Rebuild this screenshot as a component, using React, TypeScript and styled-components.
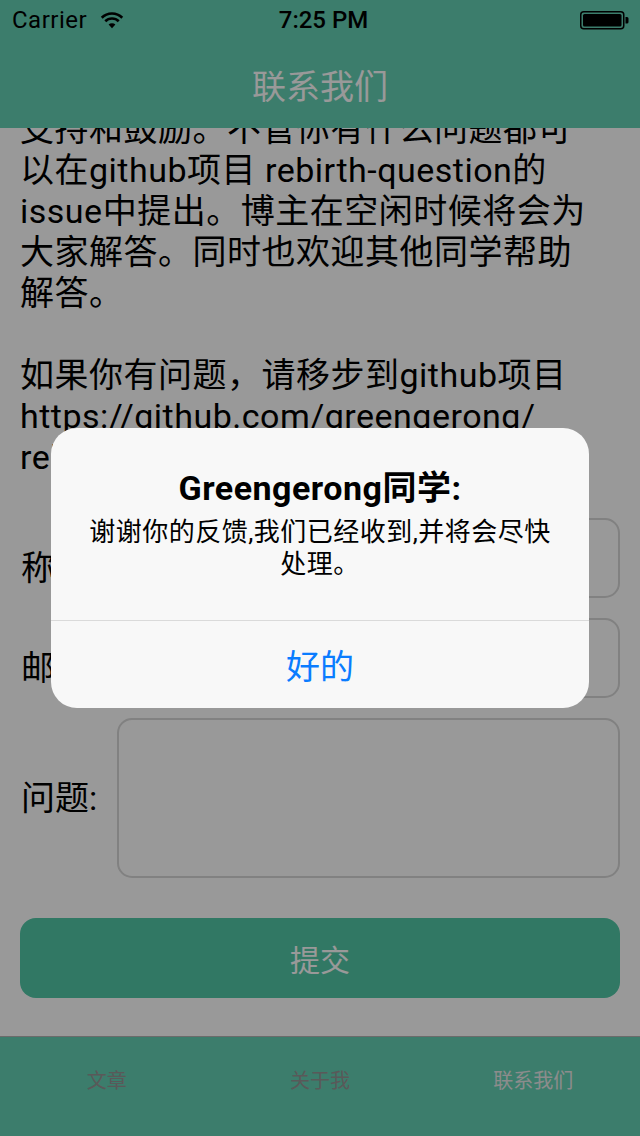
import React from "react";
import styled, { createGlobalStyle } from "styled-components";

const GlobalStyle = createGlobalStyle`
  html, body {
    margin: 0;
    padding: 0;
    width: 640px;
    height: 1136px;
    overflow: hidden;
    background: #fff;
  }
  * { box-sizing: border-box; }
`;

const GREEN = "#64d0b4";
const FONT = `Roboto, "Noto Sans CJK SC", sans-serif`;

const Screen = styled.div`
  position: relative;
  width: 640px;
  height: 1136px;
  display: flex;
  flex-direction: column;
  background: #fff;
  overflow: hidden;
  font-family: ${FONT};
`;

const StatusBar = styled.div`
  height: 40px;
  flex: 0 0 40px;
  background: ${GREEN};
  display: grid;
  grid-template-columns: 1fr auto 1fr;
  align-items: center;
  padding: 0 11px 0 12px;
  color: #000;
  font-size: 24px;
`;

const Carrier = styled.div`
  display: flex;
  align-items: center;
  gap: 13px;
  letter-spacing: 0.5px;
`;

const Clock = styled.div`
  font-weight: 500;
  font-size: 24px;
  padding-left: 6px;
`;

const BatteryWrap = styled.div`
  justify-self: end;
  display: flex;
  align-items: center;
`;

const NavBar = styled.div`
  height: 88px;
  flex: 0 0 88px;
  background: ${GREEN};
  display: flex;
  align-items: center;
  justify-content: center;
  color: #fff;
  font-size: 34px;
`;

const Content = styled.div`
  flex: 1;
  overflow: hidden;
  padding: 0 20px;
`;

const Scroller = styled.div`
  margin-top: -19px;
  display: flex;
  flex-direction: column;
`;

const Paragraph = styled.p<{ $gap?: number }>`
  margin: ${(p) => p.$gap ?? 0}px 0 0;
  font-size: 34px;
  line-height: 41px;
  letter-spacing: 0.5px;
  color: #000;
  white-space: nowrap;
`;

const Form = styled.div`
  margin-top: 40px;
  display: flex;
  flex-direction: column;
`;

const FormRow = styled.div<{ $h: number }>`
  height: ${(p) => p.$h}px;
  display: flex;
  align-items: center;
`;

const Label = styled.div`
  flex: 0 0 97px;
  font-size: 34px;
  line-height: 40px;
  color: #000;
  padding-left: 1px;
`;

const Field = styled.div<{ $h: number }>`
  align-self: flex-start;
  flex: 1;
  height: ${(p) => p.$h}px;
  border: 2px solid #d7d7d7;
  border-radius: 15px;
`;

const SubmitButton = styled.div`
  margin-top: 40px;
  height: 80px;
  border-radius: 16px;
  background: #52c8a7;
  color: #fff;
  font-size: 30px;
  display: flex;
  align-items: center;
  justify-content: center;
`;

const TabBar = styled.div`
  height: 100px;
  flex: 0 0 100px;
  background: ${GREEN};
  border-top: 1px solid #b3b3b3;
  display: grid;
  grid-template-columns: repeat(3, 1fr);
`;

const Tab = styled.div<{ $active?: boolean }>`
  display: flex;
  justify-content: center;
  padding-top: 32px;
  font-size: 20px;
  line-height: 24px;
  color: ${(p) => (p.$active ? "#eaeaea" : "#959595")};
`;

const Dim = styled.div`
  position: absolute;
  inset: 0;
  background: rgba(0, 0, 0, 0.4);
  display: flex;
  align-items: center;
  justify-content: center;
`;

const Alert = styled.div`
  width: 538px;
  border-radius: 26px;
  background: #f8f8f8;
  overflow: hidden;
  display: flex;
  flex-direction: column;
`;

const AlertBody = styled.div`
  padding: 39px 30px 40px;
  text-align: center;
  display: flex;
  flex-direction: column;
  gap: 7px;
`;

const AlertTitle = styled.div`
  font-size: 34px;
  line-height: 42px;
  font-weight: 700;
  letter-spacing: 0.5px;
  color: #000;
`;

const AlertMessage = styled.div`
  font-size: 26px;
  line-height: 32px;
  letter-spacing: 0.5px;
  color: #000;
`;

const AlertAction = styled.div`
  height: 88px;
  border-top: 1px solid #dadada;
  display: flex;
  align-items: center;
  justify-content: center;
  color: #0a7cff;
  font-size: 34px;
`;

const WifiIcon = () => (
  <svg width="24" height="17" viewBox="0 0 24 17" aria-hidden="true">
    <path d="M1.75 5.75 A14.5 14.5 0 0 1 22.25 5.75" fill="none" stroke="#000" strokeWidth="2.6" />
    <path d="M5.28 9.28 A9.5 9.5 0 0 1 18.72 9.28" fill="none" stroke="#000" strokeWidth="2.6" />
    <path d="M12 16.3 L8.6 12.6 A4.8 4.8 0 0 1 15.4 12.6 Z" fill="#000" />
  </svg>
);

const BatteryIcon = () => (
  <svg width="49" height="19" viewBox="0 0 49 19" aria-hidden="true">
    <rect x="0.75" y="0.75" width="43" height="17" rx="3" fill="none" stroke="#000" strokeWidth="1.5" />
    <rect x="3" y="3" width="38.5" height="12.5" rx="1.5" fill="#000" />
    <path d="M45.5 6 h1.5 a1.5 1.5 0 0 1 1.5 1.5 v3.5 a1.5 1.5 0 0 1 -1.5 1.5 h-1.5 Z" fill="#000" />
  </svg>
);

export default function App() {
  return (
    <>
      <GlobalStyle />
      <Screen>
        <StatusBar>
          <Carrier>
            <span>Carrier</span>
            <WifiIcon />
          </Carrier>
          <Clock>7:25 PM</Clock>
          <BatteryWrap>
            <BatteryIcon />
          </BatteryWrap>
        </StatusBar>
        <NavBar>联系我们</NavBar>
        <Content>
          <Scroller>
            <Paragraph>
              支持和鼓励。不管你有什么问题都可
              <br />
              以在github项目 rebirth-question的
              <br />
              issue中提出。博主在空闲时候将会为
              <br />
              大家解答。同时也欢迎其他同学帮助
              <br />
              解答。
            </Paragraph>
            <Paragraph $gap={41}>
              如果你有问题，请移步到github项目
              <br />
              https://github.com/greengerong/
              <br />
              rebirth-question
            </Paragraph>
            <Form>
              <FormRow $h={100}>
                <Label>称呼:</Label>
                <Field $h={80} />
              </FormRow>
              <FormRow $h={100}>
                <Label>邮箱:</Label>
                <Field $h={80} />
              </FormRow>
              <FormRow $h={160}>
                <Label>问题:</Label>
                <Field $h={160} />
              </FormRow>
            </Form>
            <SubmitButton>提交</SubmitButton>
          </Scroller>
        </Content>
        <TabBar>
          <Tab>文章</Tab>
          <Tab>关于我</Tab>
          <Tab $active>联系我们</Tab>
        </TabBar>
        <Dim>
          <Alert>
            <AlertBody>
              <AlertTitle>Greengerong同学:</AlertTitle>
              <AlertMessage>
                谢谢你的反馈,我们已经收到,并将会尽快
                <br />
                处理。
              </AlertMessage>
            </AlertBody>
            <AlertAction>好的</AlertAction>
          </Alert>
        </Dim>
      </Screen>
    </>
  );
}
